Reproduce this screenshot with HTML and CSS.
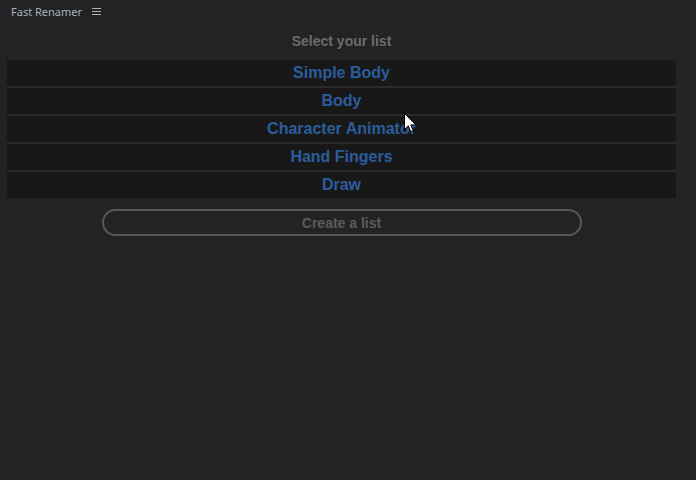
FILE: index.html
```html
<!DOCTYPE html>
<html>
<head>
<meta charset="utf-8">
<link rel="stylesheet" href="styles.css">
</head>
<body>
<div class="panel-header">
  <span class="panel-title">Fast Renamer</span>
  <svg class="menu-icon" width="9" height="7" viewBox="0 0 9 7"><path d="M0 0.5H9M0 3.5H9M0 6.5H9" stroke="#a9b4bf" stroke-width="1"/></svg>
</div>
<main class="content">
  <h2 class="heading">Select your list</h2>
  <ul class="lists">
    <li class="list-row">Simple Body</li>
    <li class="list-row">Body</li>
    <li class="list-row">Character Animator</li>
    <li class="list-row">Hand Fingers</li>
    <li class="list-row">Draw</li>
  </ul>
  <div class="actions">
    <button class="create-btn">Create a list</button>
  </div>
</main>
<svg class="cursor" width="13" height="21" viewBox="0 0 13 21"><path d="M0.5 0.5V16.5L4.3 12.8L6.8 18.7L9.2 17.6L6.8 11.9H12L0.5 0.5Z" fill="#fff" stroke="#000" stroke-width="1"/></svg>
</body>
</html>
```
FILE: styles.css
```css
html, body {
  margin: 0;
  padding: 0;
  background: #232323;
  width: 696px;
  height: 480px;
  overflow: hidden;
  font-family: "Liberation Sans", Arial, sans-serif;
}
body { position: relative; }
.panel-header {
  height: 22px;
  display: flex;
  align-items: center;
  padding-left: 11px;
  gap: 10px;
}
.panel-title {
  font-family: "Noto Sans", "Open Sans", sans-serif;
  font-size: 11px;
  color: #a9b4bf;
  letter-spacing: 0;
  margin-top: 1px;
}
.menu-icon { display: block; margin-top: 1px; }
.content {
  padding: 0 20px 0 7px;
}
.heading {
  margin: 0;
  height: 38px;
  line-height: 38px;
  text-align: center;
  font-size: 14px;
  font-weight: bold;
  color: #6c6c6c;
}
.lists {
  list-style: none;
  margin: 0;
  padding: 0;
  display: flex;
  flex-direction: column;
  gap: 2px;
  background: #2b2b2b;
}
.list-row {
  height: 26px;
  line-height: 26px;
  background: #181818;
  text-align: center;
  font-size: 16px;
  font-weight: bold;
  color: #2b5d9c;
}
.actions {
  display: flex;
  justify-content: center;
  padding-top: 11px;
}
.create-btn {
  width: 480px;
  height: 27px;
  border: 2px solid #585858;
  border-radius: 14px;
  background: #232323;
  color: #5c5c5c;
  font-family: "Liberation Sans", Arial, sans-serif;
  font-size: 14px;
  font-weight: bold;
  padding: 0;
}
.cursor {
  position: absolute;
  left: 404px;
  top: 113px;
}
```
